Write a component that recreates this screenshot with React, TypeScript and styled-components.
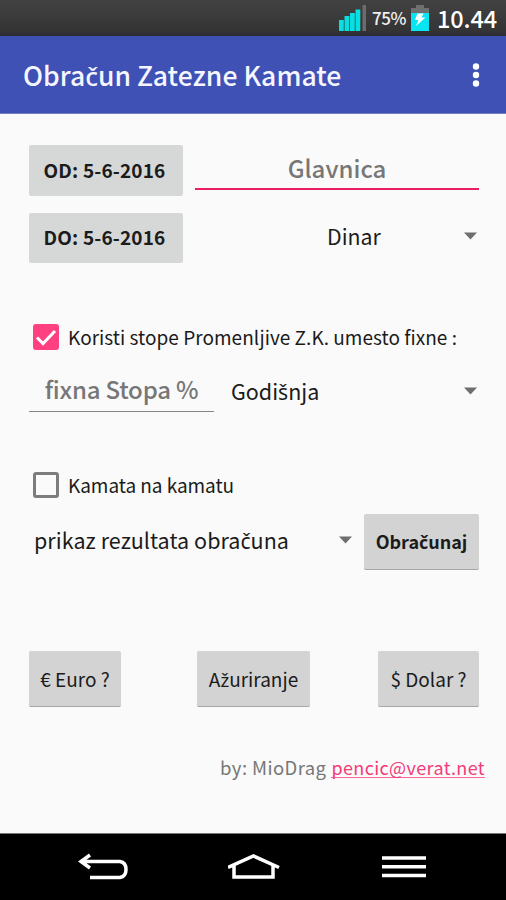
import React from 'react';
import styled, { createGlobalStyle } from 'styled-components';

const Global = createGlobalStyle`
  * { box-sizing: border-box; }
  body { margin: 0; background: #fafafa; }
  button { border: 0; padding: 0; }
`;

const Screen = styled.div`
  width: 506px;
  height: 900px;
  display: flex;
  flex-direction: column;
  overflow: hidden;
  background: #fafafa;
  color: #1b1b1b;
  font-family: 'Noto Sans CJK SC', 'Noto Sans', sans-serif;
`;

const StatusBar = styled.div`
  height: 36px;
  flex: none;
  display: flex;
  align-items: center;
  justify-content: flex-end;
  padding-right: 9px;
  background: linear-gradient(#424242, #343434 85%, #2c2c38);
`;

const AppBar = styled.header`
  height: 78px;
  flex: none;
  display: flex;
  align-items: center;
  justify-content: space-between;
  padding: 0 26px 0 23px;
  background: #3f51b5;
  border-bottom: 1px solid #7480c6;
`;

const Label = styled.span<{ $size: number; $spacing?: number; $color?: string; $weight?: number }>`
  font-size: ${p => p.$size}px;
  letter-spacing: ${p => p.$spacing ?? 0}px;
  color: ${p => p.$color ?? 'inherit'};
  font-weight: ${p => p.$weight ?? 400};
  line-height: 30px;
  white-space: nowrap;
`;

const Accent = styled.span`
  font-family: 'Noto Sans', sans-serif;
  font-size: 0.98em;
  line-height: 1;
`;

/* Serbian letters with a caron are set in a face that has them precomposed. */
const Latin = ({ children }: { children: string }) => (
  <>{children.split(/([čšž])/).map((part, i) => (i % 2 ? <Accent key={i}>{part}</Accent> : part))}</>
);

const Content = styled.main`
  flex: 1;
  padding: 31px 27px 0 29px;
`;

const Row = styled.div<{ $height: number; $top?: number }>`
  height: ${p => p.$height}px;
  margin-top: ${p => p.$top ?? 0}px;
  display: flex;
  align-items: center;
`;

const Button = styled.button<{ $width: number; $flat?: boolean; $bold?: boolean; $size?: number; $shift?: number; $spacing?: number }>`
  width: ${p => p.$width}px;
  height: 100%;
  flex: none;
  margin-left: ${p => p.$shift ?? 0}px;
  padding-right: ${p => (p.$flat ? 3 : 0)}px;
  padding-bottom: ${p => (p.$bold ? 2 : 0)}px;
  border-radius: 2px;
  border-bottom: ${p => (p.$flat ? '0' : '1px solid #a6a6a6')};
  background: ${p => (p.$flat ? '#d6d7d7' : '#d3d3d3')};
  color: #1b1b1b;
  font-family: inherit;
  font-size: ${p => p.$size ?? 19}px;
  font-weight: ${p => (p.$bold ? 700 : 400)};
  letter-spacing: ${p => p.$spacing ?? 0}px;
  line-height: 28px;
  white-space: nowrap;
`;

const Field = styled.div<{ $width: number; $height: number; $line: string; $thick: number }>`
  width: ${p => p.$width}px;
  height: ${p => p.$height}px;
  flex: none;
  display: flex;
  align-items: center;
  justify-content: center;
  padding-bottom: 3px;
  border-bottom: ${p => p.$thick}px solid ${p => p.$line};
`;

const Spinner = styled.div<{ $indent: number; $width?: number; $lift?: number }>`
  flex: ${p => (p.$width ? 'none' : 1)};
  width: ${p => (p.$width ? `${p.$width}px` : 'auto')};
  height: 34px;
  display: flex;
  align-items: center;
  justify-content: space-between;
  padding: 0 0 ${p => p.$lift ?? 4}px ${p => p.$indent}px;
`;

const Box = styled.span<{ $checked?: boolean }>`
  width: 26px;
  height: 26px;
  flex: none;
  display: flex;
  margin: 0 9px 0 4px;
  border-radius: 3px;
  border: ${p => (p.$checked ? '0' : '3px solid #7c7c7c')};
  background: ${p => (p.$checked ? '#ff4081' : 'transparent')};
`;

const Footer = styled.footer`
  display: flex;
  justify-content: flex-end;
  gap: 5px;
  margin: 45px -6px 0 0;
`;

const Mail = styled.a`
  color: #f23b79;
  font-size: 18px;
  letter-spacing: 0.38px;
  line-height: 30px;
  height: 26px;
  border-bottom: 1px solid #ff6699;
`;

const NavBar = styled.nav`
  height: 67px;
  flex: none;
  display: flex;
  align-items: center;
  justify-content: space-between;
  padding: 0 80px 0 78px;
  background: #000;
  border-top: 1px solid #777;
`;

const Spread = styled(Row)`
  justify-content: space-between;
`;

const Arrow = () => (
  <svg width="15" height="8" viewBox="0 0 15 8"><path d="M0 .5h13L6.500 7.500z" fill="#6e6e6e" /></svg>
);

const StatusIcons = styled.div`
  display: flex;
  align-items: center;
  margin-right: 8px;
  gap: 5px;
`;

export default function App() {
  return (
    <>
      <Global />
      <Screen>
        <StatusBar>
          <StatusIcons>
            <svg width="28" height="28" viewBox="0 0 28 28">
              <path d="M0 16h4.800v11H0zM5.500 12h4.800v15h-4.800zM11 9h4.800v18h-4.800zM16.500 5.500h4.800V27h-4.800z" fill="#08dfe3" />
              <path d="M23.500 1h3.500v26h-3.500z" fill="#6c6c6c" />
            </svg>
            <Label $size={17} $color="#f0f0f0" $weight={500} $spacing={-0.5}>75%</Label>
            <svg width="18" height="28" viewBox="0 0 18 28">
              <path d="M5 1h8v3h5v23H0V4h5z" fill="#707070" />
              <path d="M0 9h18v18H0z" fill="#08e5f2" />
              <path d="M6.500 9.500h6l-2 4h4L5 22l2.500-6H4z" fill="#fff" />
            </svg>
          </StatusIcons>
          <Label $size={23.5} $color="#fff" $weight={500} $spacing={-0.1}>10.44</Label>
        </StatusBar>
        <AppBar>
          <Label $size={26.5} $color="#f5f6ff" $weight={500} $spacing={0.05}><Latin>Obračun Zatezne Kamate</Latin></Label>
          <svg width="8" height="26" viewBox="0 0 8 26" fill="#fff">
            <circle cx="4" cy="4.500" r="3.200" /><circle cx="4" cy="13" r="3.200" /><circle cx="4" cy="21.500" r="3.200" />
          </svg>
        </AppBar>
        <Content>
          <Spread $height={51}>
            <Button $width={154} $flat $bold $spacing={0.15}>OD: 5-6-2016</Button>
            <Field $width={284} $height={39} $line="#e91e63" $thick={2}>
              <Label $size={24} $color="#777" $weight={500}>Glavnica</Label>
            </Field>
          </Spread>
          <Row $height={50} $top={17}>
            <Button $width={154} $flat $bold $spacing={0.15}>DO: 5-6-2016</Button>
            <Spinner $indent={144}><Label $size={21.3}>Dinar</Label><Arrow /></Spinner>
          </Row>
          <Row $height={28} $top={60}>
            <Box $checked>
              <svg width="26" height="26" viewBox="0 0 26 26">
                <path d="M4 13.500l6 6L22 7" fill="none" stroke="#fff" strokeWidth="3" />
              </svg>
            </Box>
            <Label $size={19} $spacing={0.03}>Koristi stope Promenljive Z.K. umesto fixne :</Label>
          </Row>
          <Row $height={42} $top={19}>
            <Field $width={185} $height={42} $line="#858585" $thick={1}>
              <Label $size={24} $color="#777" $weight={500} $spacing={-0.2}>fixna Stopa %</Label>
            </Field>
            <Spinner $indent={17} $lift={0}><Label $size={21.5}><Latin>Godišnja</Latin></Label><Arrow /></Spinner>
          </Row>
          <Row $height={28} $top={59}>
            <Box />
            <Label $size={19} $spacing={-0.05}>Kamata na kamatu</Label>
          </Row>
          <Spread $height={56} $top={15}>
            <Spinner $indent={5} $width={325}><Label $size={21.5} $spacing={0.04}><Latin>prikaz rezultata obračuna</Latin></Label><Arrow /></Spinner>
            <Button $width={115} $size={18} $bold><Latin>Obračunaj</Latin></Button>
          </Spread>
          <Spread $height={56} $top={81}>
            <Button $width={92}>€ Euro ?</Button>
            <Button $width={113} $shift={8}><Latin>Ažuriranje</Latin></Button>
            <Button $width={101}>$ Dolar ?</Button>
          </Spread>
          <Footer>
            <Label $size={18.5} $spacing={0.4} $color="#777">by: MioDrag</Label>
            <Mail>pencic@verat.net</Mail>
          </Footer>
        </Content>
        <NavBar>
          <svg width="50" height="28" viewBox="0 0 50 28" fill="none" stroke="#fff" strokeWidth="3.500">
            <path d="M12 2L3 8.500l9 6.500M3 8.500h39q6 1 6 8t-6 8H12" />
          </svg>
          <svg width="54" height="28" viewBox="0 0 54 28" fill="none" stroke="#fff" strokeWidth="3.500">
            <path d="M0 14.500L25.500 3 51 14.500M6 12v12h39V12" />
          </svg>
          <svg width="44" height="28" viewBox="0 0 44 28" stroke="#fff" strokeWidth="3.500">
            <path d="M0 5h44M0 13.700h44M0 22.500h44" />
          </svg>
        </NavBar>
      </Screen>
    </>
  );
}
